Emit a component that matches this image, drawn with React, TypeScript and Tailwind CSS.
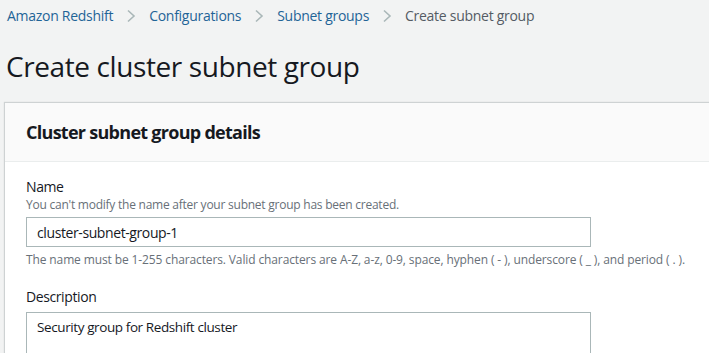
import React from "react";

function Chevron() {
  return (
    <svg width="12" height="14" viewBox="0 0 12 14" className="mx-[12px]">
      <path d="M3 1.5 L9 7 L3 12.5" fill="none" stroke="#aab7b8" strokeWidth="1.6" />
    </svg>
  );
}

export default function App() {
  return (
    <div
      className="w-[709px] h-[353px] overflow-hidden bg-[#f2f3f3] text-[#16191f] tracking-[-0.025em]"
      style={{ fontFamily: '"Open Sans", "Noto Sans", Arial, sans-serif' }}
    >
      <nav className="flex items-center h-[32px] pl-[7px] text-[14px] leading-[20px] tracking-[-0.02em]">
        <span className="text-[#1f6497]">Amazon Redshift</span>
        <Chevron />
        <span className="text-[#1f6497]">Configurations</span>
        <Chevron />
        <span className="text-[#1f6497]">Subnet groups</span>
        <Chevron />
        <span className="text-[#545b64]">Create subnet group</span>
      </nav>
      <h1 className="pl-[6px] pt-[14px] text-[28px] leading-[40px] font-normal text-[#16191f]">
        Create cluster subnet group
      </h1>
      <div className="ml-[5px] mt-[17px] bg-white shadow-[0_0_1px_1px_rgba(0,28,36,0.15)] h-[400px]">
        <div className="bg-[#fafafa] border-b border-[#eaeded] h-[59px] flex items-center pl-[21px]">
          <h2 className="text-[18px] font-bold leading-[24px] text-[#16191f] tracking-[-0.04em]">
            Cluster subnet group details
          </h2>
        </div>
        <div className="pl-[21px] pt-[15px] pr-[10px]">
          <div className="text-[14px] leading-[20px] text-[#16191f]">Name</div>
          <div className="text-[12px] leading-[16px] text-[#687078] tracking-[-0.02em]">
            You can't modify the name after your subnet group has been created.
          </div>
          <div className="mt-[4px] w-[565px] h-[30px] border border-[#aab7b8] flex items-center pl-[10px] text-[14px] text-[#16191f]">
            cluster-subnet-group-1
          </div>
          <div className="mt-[5px] text-[12px] leading-[16px] text-[#687078] whitespace-nowrap tracking-[-0.01em]">
            The name must be 1-255 characters. Valid characters are A-Z, a-z, 0-9, space, hyphen ( - ), underscore ( _ ), and period ( . ).
          </div>
          <div className="mt-[19px] text-[14px] leading-[20px] text-[#16191f]">Description</div>
          <div className="mt-[5px] w-[565px] h-[60px] border border-[#aab7b8] pl-[10px] pt-[4px] text-[13.5px] leading-[20px] text-[#16191f]">
            Security group for Redshift cluster
          </div>
        </div>
      </div>
    </div>
  );
}
